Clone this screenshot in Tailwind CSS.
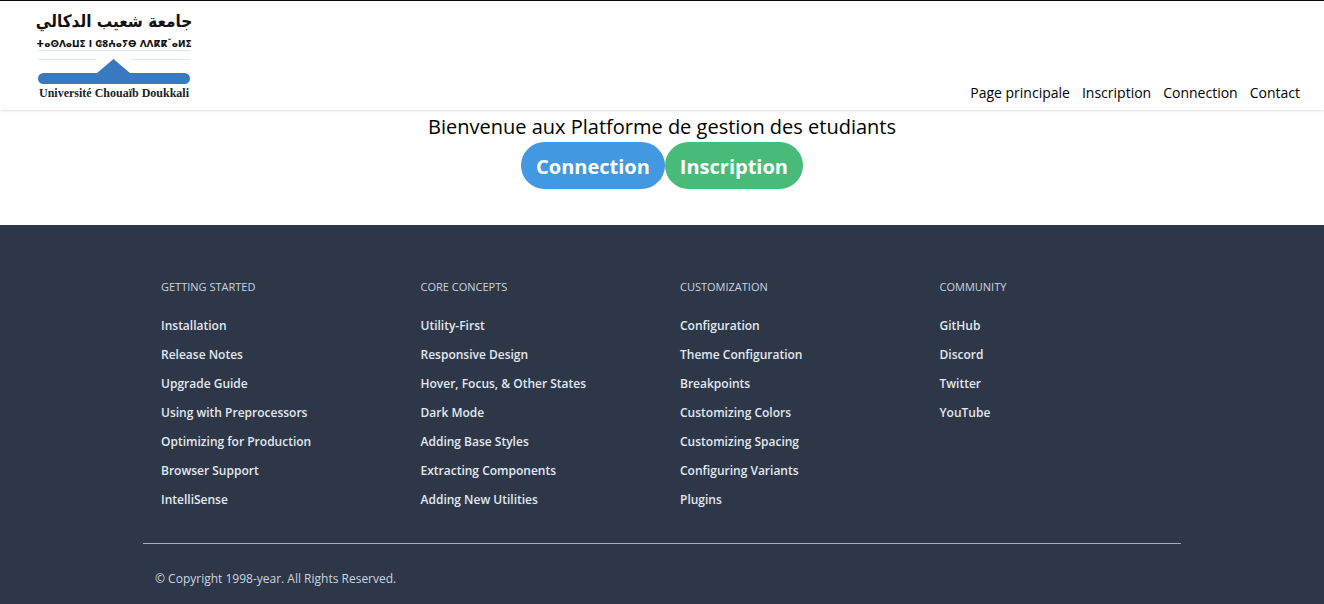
<!DOCTYPE html>
<html lang="fr">
<head>
<meta charset="utf-8">
<meta name="viewport" content="width=device-width, initial-scale=1">
<title>Université Chouaïb Doukkali</title>
<script src="https://cdn.jsdelivr.net/npm/@tailwindcss/browser@4"></script>
</head>
<body class="flex min-h-screen flex-col bg-white font-['Open_Sans','Noto_Sans',sans-serif] text-black">
<header class="flex items-end justify-between border-t border-[#0b0616] pr-6 pl-9 pb-2 shadow-sm">
  <a href="#" aria-label="Université Chouaïb Doukkali" class="block pt-1">
    <svg class="block h-[97px] w-[157px] overflow-visible" viewBox="0 0 157 97" role="img" aria-label="Université Chouaïb Doukkali">
      <text x="78" y="22" text-anchor="middle" direction="rtl" font-family="'DejaVu Sans Condensed', 'DejaVu Sans', sans-serif" font-size="17" font-weight="700" fill="#111">جامعة شعيب الدكالي</text>
      <text x="78" y="42" text-anchor="middle" font-family="'DejaVu Sans Condensed', 'DejaVu Sans', sans-serif" font-size="10" font-weight="700" fill="#111">ⵜⴰⵙⴷⴰⵡⵉ ⵏ ⵛⵓⵄⴰⵢⴱ ⴷⴷⴽⴽ˘ⴰⵍⵉ</text>
      <path d="M2 45.500h152M2 54.500h59M95 54.500h59" stroke="#d5ece4"/>
      <path d="M61 68 77.500 54 94 68h54.500a5.500 5.500 0 0 1 0 11H7.500a5.500 5.500 0 0 1 0-11z" fill="#3979bf"/>
      <text x="78" y="92" text-anchor="middle" font-family="'Liberation Serif', serif" font-size="12" font-weight="700" fill="#222">Université Chouaïb Doukkali</text>
    </svg>
  </a>
  <nav class="flex gap-3 text-sm leading-[18px]">
    <a href="#">Page principale</a>
    <a href="#">Inscription</a>
    <a href="#">Connection</a>
    <a href="#">Contact</a>
  </nav>
</header>
<main class="flex flex-col items-center pb-9">
  <h1 class="pt-0.5 text-xl leading-[30px]">Bienvenue aux Platforme de gestion des etudiants</h1>
  <div class="flex text-xl leading-[33px] font-bold text-white">
    <button type="button" class="rounded-full bg-[#4299e1] px-[15px] pt-2 pb-1.5">Connection</button>
    <button type="button" class="rounded-full bg-[#48bb78] px-[15px] pt-2 pb-1.5">Inscription</button>
  </div>
</main>
<footer class="grow bg-[#2d3748] px-6 pt-[50px] text-xs text-[#cbd5e0]">
  <div class="mx-auto max-w-[1038px]">
    <div class="grid grid-cols-4 pb-[29px] font-semibold text-[#e2e8f0]">
      <section class="px-[18px]">
        <h2 class="mb-3 text-[11px] leading-6 font-medium text-[#cbd5e0] uppercase">Getting Started</h2>
        <ul class="leading-[29px]">
          <li><a href="#">Installation</a></li>
          <li><a href="#">Release Notes</a></li>
          <li><a href="#">Upgrade Guide</a></li>
          <li><a href="#">Using with Preprocessors</a></li>
          <li><a href="#">Optimizing for Production</a></li>
          <li><a href="#">Browser Support</a></li>
          <li><a href="#">IntelliSense</a></li>
        </ul>
      </section>
      <section class="px-[18px]">
        <h2 class="mb-3 text-[11px] leading-6 font-medium text-[#cbd5e0] uppercase">Core Concepts</h2>
        <ul class="leading-[29px]">
          <li><a href="#">Utility-First</a></li>
          <li><a href="#">Responsive Design</a></li>
          <li><a href="#">Hover, Focus, &amp; Other States</a></li>
          <li><a href="#">Dark Mode</a></li>
          <li><a href="#">Adding Base Styles</a></li>
          <li><a href="#">Extracting Components</a></li>
          <li><a href="#">Adding New Utilities</a></li>
        </ul>
      </section>
      <section class="px-[18px]">
        <h2 class="mb-3 text-[11px] leading-6 font-medium text-[#cbd5e0] uppercase">Customization</h2>
        <ul class="leading-[29px]">
          <li><a href="#">Configuration</a></li>
          <li><a href="#">Theme Configuration</a></li>
          <li><a href="#">Breakpoints</a></li>
          <li><a href="#">Customizing Colors</a></li>
          <li><a href="#">Customizing Spacing</a></li>
          <li><a href="#">Configuring Variants</a></li>
          <li><a href="#">Plugins</a></li>
        </ul>
      </section>
      <section class="px-[18px]">
        <h2 class="mb-3 text-[11px] leading-6 font-medium text-[#cbd5e0] uppercase">Community</h2>
        <ul class="leading-[29px]">
          <li><a href="#">GitHub</a></li>
          <li><a href="#">Discord</a></li>
          <li><a href="#">Twitter</a></li>
          <li><a href="#">YouTube</a></li>
        </ul>
      </section>
    </div>
    <p class="border-t border-[#a0aec0] px-3 pt-[25px] pb-[15px] leading-5">© Copyright 1998-year. All Rights Reserved.</p>
  </div>
</footer>
</body>
</html>
